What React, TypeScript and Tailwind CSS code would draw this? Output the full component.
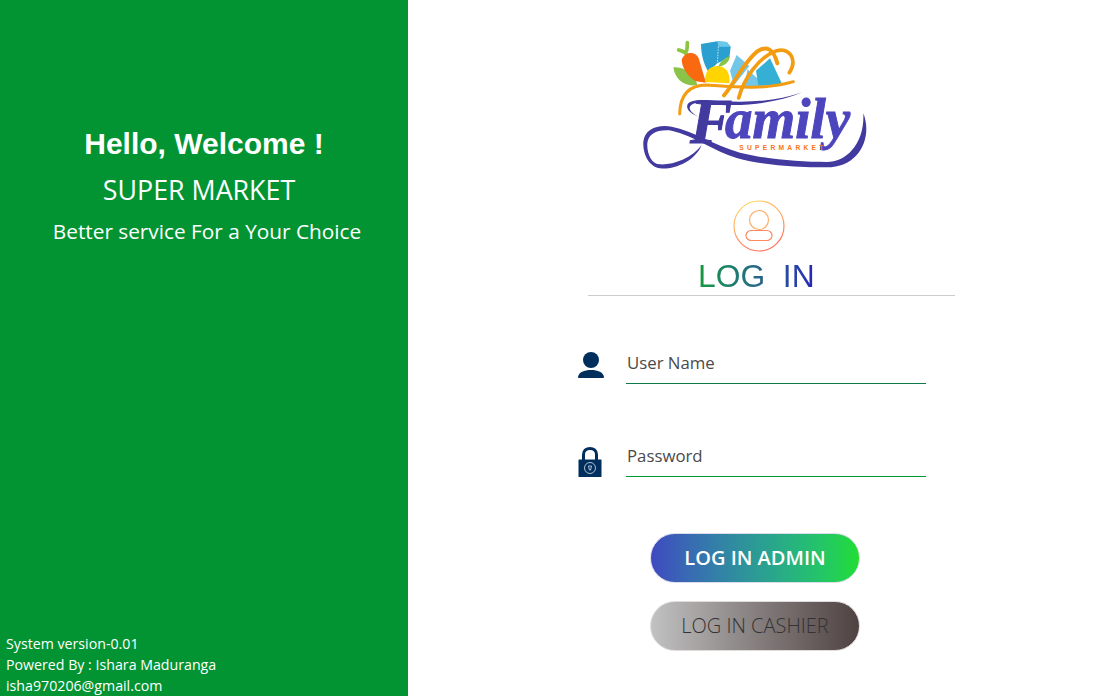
import React from 'react';

const Logo = () => (
  <svg width="250" height="150" viewBox="0 0 750 450" fill="none">
    {/* groceries */}
    <path d="M130 112C165 108 195 135 202 165C165 172 135 150 130 112Z" fill="#8bc34a" />
    <path d="M172 78C168 64 158 64 146 60M170 62C172 52 172 44 172 38" stroke="#8cc63f" strokeWidth="11" strokeLinecap="round" />
    <path d="M155 90C162 64 197 62 206 85L228 158L197 154C173 138 156 115 155 90Z" fill="#f96a10" />
    <path d="M213 42L262 34L290 36L302 50L298 84L262 100L235 125C220 100 213 70 213 42Z" fill="#2a9fd0" />
    <path d="M262 34L290 36L302 50L265 50Z" fill="#6cc8e8" />
    <path d="M265 50L262 100" stroke="#ffffff" strokeWidth="2" strokeDasharray="5 3" />
    <path d="M226 156C222 125 240 108 262 108C285 108 302 125 298 160Z" fill="#ffd400" />
    <path d="M265 110C270 95 285 82 300 78C298 95 285 108 265 110Z" fill="#8bc34a" />
    <path d="M320 75L358 108L312 166L300 122Z" fill="#72c7e9" />
    <path d="M352 118L412 172L345 172Z" fill="#72c7e9" />
    <path d="M420 85L458 166L385 166L378 122Z" fill="#35afd4" />
    {/* orange swooshes */}
    <path d="M149 252C150 195 175 165 230 165C300 170 400 182 490 155" stroke="#f39c12" strokeWidth="9" strokeLinecap="round" />
    <path d="M282 196C310 165 345 90 385 62C410 48 430 55 442 100" stroke="#f39c12" strokeWidth="12" strokeLinecap="round" />
    <path d="M326 204C340 150 385 80 440 62C480 52 503 90 478 128" stroke="#f39c12" strokeWidth="11" strokeLinecap="round" />
    {/* purple flourish */}
    <path d="M517 187C440 215 350 218 270 213C230 210 190 205 175 220C165 232 175 250 210 262C185 250 170 235 185 224C200 214 240 222 270 224C360 230 450 215 517 187Z" fill="#423a9e" />
    <path d="M215 345C195 395 130 420 90 415C55 410 38 370 40 335C45 295 85 283 125 290C190 302 250 345 330 368C410 388 510 396 590 396C650 396 704 340 700 250C728 320 690 412 590 412C500 412 400 406 320 384C250 362 190 316 125 302C85 297 55 310 52 340C50 370 65 403 90 403C130 405 185 385 215 345Z" fill="#423a9e" />
    <text y="325" fontFamily="'Liberation Serif', serif" fontWeight="700" fontStyle="italic" fontSize="170" stroke="#4c45bd" strokeWidth="3" fill="#4c45bd">
      <tspan x="180" y="340" fontSize="190" fill="#423a9e" stroke="#423a9e">F</tspan>
      <tspan x="285" y="325" textLength="375" lengthAdjust="spacingAndGlyphs">amily</tspan>
    </text>
    <text x="328" y="360" fontFamily="'Liberation Sans', sans-serif" fontWeight="700" fontSize="20" textLength="252" fill="#f97316">
      SUPERMARKET
    </text>
  </svg>
);

const ProfileIcon = () => (
  <svg width="52" height="52" viewBox="0 0 52 52" fill="none">
    <defs>
      <linearGradient id="profileStroke" x1="0.25" y1="0" x2="0.7" y2="1">
        <stop offset="0" stopColor="#ffd76a" />
        <stop offset="1" stopColor="#ff6a5c" />
      </linearGradient>
    </defs>
    <circle cx="26" cy="26" r="25" stroke="url(#profileStroke)" strokeWidth="1.2" />
    <circle cx="26" cy="20" r="9.5" stroke="#fdae6b" strokeWidth="1.2" />
    <rect x="13" y="30.5" width="26" height="10" rx="5" stroke="#fb8a63" strokeWidth="1.2" />
  </svg>
);

const UserIcon = () => (
  <svg width="30" height="30" viewBox="0 0 30 30" fill="#002e5d">
    <circle cx="15" cy="10" r="8" />
    <path d="M2 27C3 22 8 20 15 20S27 22 28 27C28 27.700 27.500 28 27 28H3C2.500 28 2 27.700 2 27Z" />
  </svg>
);

const LockIcon = () => (
  <svg width="26" height="30" viewBox="0 0 26 30" fill="none">
    <path d="M6.500 13V7.500C6.500 3.500 9.500 1.500 13 1.500S19.500 3.500 19.500 7.500V13" stroke="#002e5d" strokeWidth="3" />
    <rect x="1.500" y="12.500" width="23" height="17.500" rx="0.500" fill="#002e5d" />
    <circle cx="13" cy="21" r="5.500" stroke="#dbe4ee" strokeWidth="0.8" />
    <path d="M11.500 19H14.500L13.600 23H12.400Z" stroke="#dbe4ee" strokeWidth="0.8" />
  </svg>
);

const App = () => {
  return (
    <div className="flex h-screen overflow-hidden bg-white font-['Open_Sans','Noto_Sans',sans-serif]">
      {/* Left panel */}
      <div className="flex w-[408px] shrink-0 flex-col justify-between bg-[#029433] text-white">
        <div className="flex flex-col items-center pt-[126px]">
          <h1 className="font-['Liberation_Sans',sans-serif] text-[30px] leading-[36px] font-bold">
            Hello, Welcome !
          </h1>
          <p className="mt-[11px] mr-[10px] text-[26.8px] leading-[34px]">SUPER MARKET</p>
          <p className="mt-[9px] ml-[6px] text-[20.8px] leading-[30px]">
            Better service For a Your Choice
          </p>
        </div>
        <div className="pl-[6px] text-[14.2px] leading-[21px]">
          <p>System version-0.01</p>
          <p>Powered By : Ishara Maduranga</p>
          <p>isha970206@gmail.com</p>
        </div>
      </div>

      {/* Login form */}
      <div className="flex flex-1 flex-col items-start pl-[180px]">
        <div className="mt-[30px] ml-[42px]">
          <Logo />
        </div>
        <div className="mt-[20px] ml-[145px]">
          <ProfileIcon />
        </div>
        <h2 className="mt-[6px] ml-[110px] bg-gradient-to-r from-[#159a3a] via-[#2a5c8f] via-60% to-[#2a1fbb] bg-clip-text font-['Liberation_Sans',sans-serif] text-[31.800px] leading-[37px] whitespace-pre text-transparent">
          LOG  IN
        </h2>
        <div className="h-[1px] w-[367px] bg-[#cccccc]" />

        <div className="mt-[54px] flex items-center">
          <div className="ml-[-12px] mb-[6px] w-[38px]">
            <UserIcon />
          </div>
          <input
            placeholder="User Name"
            className="ml-[12px] h-[32px] w-[300px] border-b border-[#0b7a45] pb-[10px] pl-[1px] text-[16.8px] outline-none placeholder:text-[#4a4a4a]"
          />
        </div>

        <div className="mt-[59px] flex items-center">
          <div className="ml-[-11px] mt-[2px] w-[38px]">
            <LockIcon />
          </div>
          <input
            placeholder="Password"
            className="ml-[11px] h-[32px] w-[300px] border-b border-[#009933] pb-[10px] pl-[1px] text-[16.8px] outline-none placeholder:text-[#4a4a4a]"
          />
        </div>

        <button className="mt-[56px] ml-[62px] h-[50px] w-[210px] rounded-full border border-[#dcdcec] bg-gradient-to-r from-[#3f48c0] to-[#22dd2e] text-[20px] font-semibold text-white">
          LOG IN ADMIN
        </button>
        <button className="mt-[18px] ml-[62px] h-[50px] w-[210px] rounded-full border border-[#e0dcdc] bg-gradient-to-r from-[#c2c2c2] to-[#4f4342] text-[20px] font-light text-[#333333]">
          LOG IN CASHIER
        </button>
      </div>
    </div>
  );
};

export default App;
